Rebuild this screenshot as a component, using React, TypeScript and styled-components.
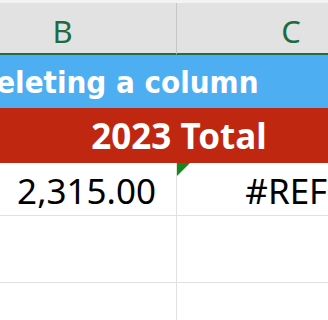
import React from "react";
import styled, { createGlobalStyle } from "styled-components";

const Global = createGlobalStyle`
  html, body { margin: 0; padding: 0; background: #ffffff; }
  body { width: 328px; height: 320px; overflow: hidden; }
`;

const Viewport = styled.div`
  width: 328px;
  height: 320px;
  overflow: hidden;
  background: #ffffff;
  font-family: "Noto Sans", "Liberation Sans", sans-serif;
`;

const Sheet = styled.div`
  margin-left: -51px;
  width: 456px;
  display: grid;
  grid-template-columns: 228px 228px;
`;

const TopStrip = styled.div`
  grid-column: 1 / -1;
  height: 3px;
  background: #f3f3f3;
`;

const HeaderWrap = styled.div`
  grid-column: 1 / -1;
  display: grid;
  grid-template-columns: 228px 228px;
  height: 52px;
`;

const ColHeader = styled.div<{ $last?: boolean }>`
  height: 52px;
  background: #e2e2e2;
  border-right: ${(p) => (p.$last ? "none" : "1px solid #c6c6c6")};
  border-bottom: 2px solid #1f6e43;
  display: flex;
  align-items: center;
  justify-content: center;
  padding-top: 6px;
  box-sizing: border-box;
  color: #1e6b3f;
  font-size: 31px;
`;

const TitleBand = styled.div`
  grid-column: 1 / -1;
  height: 53px;
  background: #4eaef2;
  color: #ffffff;
  font-family: "Liberation Sans Narrow", "DejaVu Sans Condensed", "Noto Sans", sans-serif;
  font-weight: 700;
  font-size: 31px;
  display: flex;
  align-items: center;
  white-space: nowrap;
`;

const TitleText = styled.span`
  margin-left: 24px;
  padding-top: 2px;
  line-height: 1;
`;

const TotalBand = styled.div`
  grid-column: 1 / -1;
  height: 55px;
  background: #bf2710;
  color: #ffffff;
  font-weight: 700;
  font-size: 35px;
  display: flex;
  align-items: center;
  justify-content: center;
  padding-left: 4px;
  box-sizing: border-box;
`;

const Cell = styled.div<{ $h: number; $last?: boolean; $center?: boolean }>`
  position: relative;
  height: ${(p) => p.$h}px;
  box-sizing: border-box;
  border-bottom: 1px solid #e1e1e1;
  border-right: ${(p) => (p.$last ? "none" : "1px solid #e1e1e1")};
  display: flex;
  align-items: center;
  justify-content: ${(p) => (p.$center ? "center" : "flex-end")};
  padding-right: ${(p) => (p.$center ? "0" : "20px")};
  padding-top: 2px;
  color: #000000;
  font-size: 35px;
  white-space: nowrap;
`;

const ErrorFlag = styled.span`
  position: absolute;
  top: 0;
  left: 0;
  width: 0;
  height: 0;
  border-top: 13px solid #17891a;
  border-right: 13px solid transparent;
`;

export default function App() {
  return (
    <Viewport>
      <Global />
      <Sheet>
        <TopStrip />
        <HeaderWrap>
          <ColHeader>B</ColHeader>
          <ColHeader $last>C</ColHeader>
        </HeaderWrap>
        <TitleBand>
          <TitleText>Deleting a column</TitleText>
        </TitleBand>
        <TotalBand>2023 Total</TotalBand>
        <Cell $h={53}>2,315.00</Cell>
        <Cell $h={53} $last $center>
          <ErrorFlag />
          #REF!
        </Cell>
        <Cell $h={67} />
        <Cell $h={67} $last />
        <Cell $h={60} />
        <Cell $h={60} $last />
      </Sheet>
    </Viewport>
  );
}
